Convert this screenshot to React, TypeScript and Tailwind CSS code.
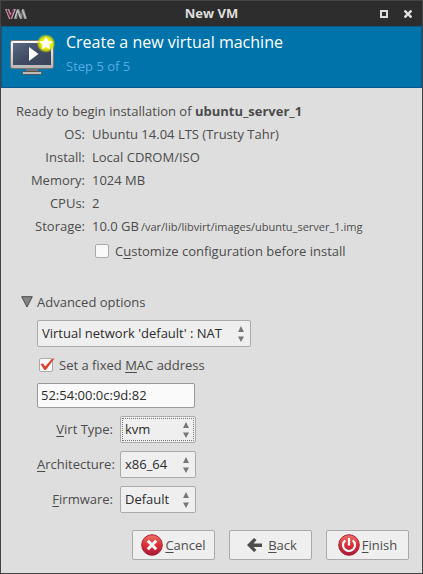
import type { ReactNode } from 'react';

const summary: { label: string; value: string; path?: string }[] = [
  { label: 'OS:', value: 'Ubuntu 14.04 LTS (Trusty Tahr)' },
  { label: 'Install:', value: 'Local CDROM/ISO' },
  { label: 'Memory:', value: '1024 MB' },
  { label: 'CPUs:', value: '2' },
  { label: 'Storage:', value: '10.0 GB', path: '/var/lib/libvirt/images/ubuntu_server_1.img' },
];

function Key({ children }: { children: ReactNode }) {
  return <span className="underline underline-offset-2">{children}</span>;
}

function Tick({ id, checked, children }: { id: string; checked?: boolean; children: ReactNode }) {
  return (
    <div className="flex h-6 items-center gap-1.5">
      <span className="relative flex">
        <input
          id={id}
          type="checkbox"
          defaultChecked={checked}
          className="peer size-3.5 appearance-none rounded-xs border border-[#aaa] bg-[#f9f9f9]"
        />
        <svg viewBox="0 0 14 14" className="pointer-events-none absolute inset-0 hidden size-3.5 overflow-visible peer-checked:block">
          <path d="M1.500 6 4 5.500 6.200 8.500 13 .8 15.500.5 6.800 12 5.300 12z" fill="#d8452f" />
        </svg>
      </span>
      <label htmlFor={id}>{children}</label>
    </div>
  );
}

function Combo({ id, value, width, label, focused }: { id: string; value: string; width: string; label?: string; focused?: boolean }) {
  return (
    <div className={`relative ${width}`}>
      <select
        id={id}
        aria-label={label}
        defaultValue={value}
        className="h-[27px] w-full appearance-none rounded-xs border border-[#aaa] bg-[#efefef] pl-1 text-[#2c2c2c] outline-none"
      >
        <option>{value}</option>
      </select>
      {focused && <span className="pointer-events-none absolute inset-0.5 border border-dotted border-[#777]" />}
      <svg viewBox="0 0 6 16" className="pointer-events-none absolute top-1.5 right-[7px] h-4 w-1.5">
        <path d="M0 6 3 0 6 6zM0 10.500h6L3 16z" fill="#777" />
      </svg>
    </div>
  );
}

function MonitorIcon() {
  return (
    <svg viewBox="0 0 48 48" className="size-12 shrink-0">
      <defs>
        <linearGradient id="frame" x1="0" y1="0" x2="0" y2="1">
          <stop offset="0" stopColor="#fff" />
          <stop offset="1" stopColor="#b5b5b5" />
        </linearGradient>
        <linearGradient id="screen" x1="0" y1="0" x2="1" y2="1">
          <stop offset="0" stopColor="#5b6984" />
          <stop offset="0.5" stopColor="#414c62" />
          <stop offset="1" stopColor="#39445a" />
        </linearGradient>
        <radialGradient id="glow">
          <stop offset="0.5" stopColor="#f4f000" />
          <stop offset="0.75" stopColor="#d7e000" stopOpacity="0.85" />
          <stop offset="1" stopColor="#b8d000" stopOpacity="0" />
        </radialGradient>
      </defs>
      <path d="M19 38h12v4H19z" fill="#777" />
      <rect x="15.500" y="41.500" width="19" height="3" rx="1" fill="#bbb" stroke="#555" />
      <rect x="3.500" y="10.500" width="43" height="28" rx="2" fill="url(#frame)" stroke="#777" />
      <rect x="6" y="13" width="38" height="22" fill="url(#screen)" />
      <path d="M22 17v14l9.500-7z" fill="#fff" />
      <circle cx="39" cy="13.500" r="9.500" fill="url(#glow)" />
      <path d="m39 6.500 2 4.300 4.800.600-3.500 3.300.900 4.800-4.200-2.400-4.200 2.400.900-4.800-3.500-3.300 4.800-.600z" fill="#fff" />
    </svg>
  );
}

function RoundIcon({ kind }: { kind: 'cancel' | 'finish' }) {
  const gradient = `${kind}-red`;
  return (
    <svg viewBox="0 0 22 22" className="size-[22px] shrink-0" fill="none">
      <defs>
        <linearGradient id={gradient} x1="0" y1="0" x2="0" y2="1">
          <stop offset="0" stopColor="#ed7469" />
          <stop offset="0.5" stopColor="#d93037" />
          <stop offset="1" stopColor="#a61b3c" />
        </linearGradient>
      </defs>
      <circle cx="11" cy="11" r="10.300" fill={`url(#${gradient})`} stroke="#a92133" />
      {kind === 'cancel' ? (
        <path d="m6.800 6.800 8.400 8.400m0-8.400-8.400 8.400" stroke="#fff" strokeWidth="3" />
      ) : (
        <path d="M11 4v7.500M7.300 6.300a6 6 0 1 0 7.400 0" stroke="#fff" strokeWidth="2.200" />
      )}
    </svg>
  );
}

const buttonClass =
  'flex h-[30px] w-[83px] items-center justify-center gap-0.5 rounded-xs border border-[#aaa] bg-[#efefef] text-[#4c4c4c]';

export default function App() {
  return (
    <main className="flex min-h-screen flex-col border border-[#454545] bg-[#dedede] font-['Open_Sans','Noto_Sans',sans-serif] text-[13px] leading-[23px] text-[#4c4c4c]">
      <header className="grid h-[25px] grid-cols-[44px_1fr_44px] items-center bg-[#2d2d2d] text-[#dedede]">
        <svg viewBox="0 0 22 10" className="ml-1 h-2.5 w-[22px]" fill="none">
          <path d="M0 0h4l2 5 2-5h3L7 10H4z" fill="#b9a0ac" />
          <path d="m2 .5 3.500 8 3-8" stroke="#702848" strokeWidth="1.600" />
          <path d="M9 10 12 0h2l2 5 1-5h2l3 10h-3l-1-4-1 4h-2l-2-5-1 5z" fill="#8f8f8f" />
          <path d="m10 9 2.500-8 3 8m2-8 3 8" stroke="#d0d0d0" />
          <path d="m12 9 1-5m3-3 2 8" stroke="#555" />
        </svg>
        <h1 className="text-center text-[13px] font-bold">New VM</h1>
        <div className="flex items-center justify-end gap-4 pr-2.5">
          <button aria-label="Maximize">
            <svg viewBox="0 0 8 8" className="size-2" fill="none" stroke="#dedede" strokeWidth="2">
              <path d="M1 1h6v6H1z" />
            </svg>
          </button>
          <button aria-label="Close">
            <svg viewBox="0 0 8 8" className="size-2" stroke="#dedede" strokeWidth="2.400">
              <path d="m.5.5 7 7m0-7-7 7" />
            </svg>
          </button>
        </div>
      </header>

      <section className="flex h-[62px] gap-[11px] border border-[#0a588a] bg-[#0073ab] pt-[3px] pl-[5px]">
        <MonitorIcon />
        <div>
          <h2 className="text-base leading-6 text-white">Create a new virtual machine</h2>
          <p className="leading-6 text-[#55aee0]">Step 5 of 5</p>
        </div>
      </section>

      <section className="px-[15px] pt-3">
        <p>
          Ready to begin installation of <strong className="font-bold">ubuntu_server_1</strong>
        </p>
        <dl>
          {summary.map((row) => (
            <div key={row.label} className="grid grid-cols-[69px_1fr] gap-[7px]">
              <dt className="text-right">{row.label}</dt>
              <dd className="whitespace-nowrap">
                {row.value}
                {row.path && <span className="ml-0.5 text-[11px]">{row.path}</span>}
              </dd>
            </div>
          ))}
        </dl>
        <div className="pt-px pl-[79px]">
          <Tick id="customize">
            C<Key>u</Key>stomize configuration before install
          </Tick>
        </div>
      </section>

      <section className="px-5 pt-[27px]">
        <button className="flex h-6 items-center gap-1" aria-expanded="true">
          <svg viewBox="0 0 12 12" className="size-3">
            <path d="M.7.700h10.600L6 11z" fill="#858585" stroke="#4c4c4c" />
          </svg>
          Advanced options
        </button>
        <div className="pt-1.5 pl-4">
          <Combo id="network" label="Network" value="Virtual network 'default' : NAT" width="w-[214px]" />
          <div className="py-1.5 pl-0.5">
            <Tick id="fixed-mac" checked>
              Set a fixed <Key>M</Key>AC address
            </Tick>
          </div>
          <input
            aria-label="MAC address"
            defaultValue="52:54:00:0c:9d:82"
            className="block h-[25px] w-[158px] rounded-xs border border-[#999] bg-[#fafafa] px-[3px] pb-0.5 text-[#2c2c2c] outline-none"
          />
          <div className="grid grid-cols-[76px_76px] items-center gap-x-[7px] gap-y-2 pt-2">
            <label htmlFor="virt" className="text-right"><Key>V</Key>irt Type:</label>
            <Combo id="virt" value="kvm" width="w-full" focused />
            <label htmlFor="arch" className="text-right"><Key>A</Key>rchitecture:</label>
            <Combo id="arch" value="x86_64" width="w-full" />
            <label htmlFor="firmware" className="text-right"><Key>F</Key>irmware:</label>
            <Combo id="firmware" value="Default" width="w-full" />
          </div>
        </div>
      </section>

      <footer className="mt-auto flex justify-end gap-3.5 px-[13px] pb-[13px]">
        <button className={buttonClass}>
          <RoundIcon kind="cancel" />
          <span><Key>C</Key>ancel</span>
        </button>
        <button className={buttonClass}>
          <svg viewBox="0 0 22 22" className="size-[22px]" fill="#4c4c4c">
            <path d="M3 11 10 4l2.500 2-3 3.500h8.500v3.500H9.500l3 3-2.500 2z" />
          </svg>
          <span><Key>B</Key>ack</span>
        </button>
        <button className={buttonClass}>
          <RoundIcon kind="finish" />
          <span><Key>F</Key>inish</span>
        </button>
      </footer>
    </main>
  );
}
